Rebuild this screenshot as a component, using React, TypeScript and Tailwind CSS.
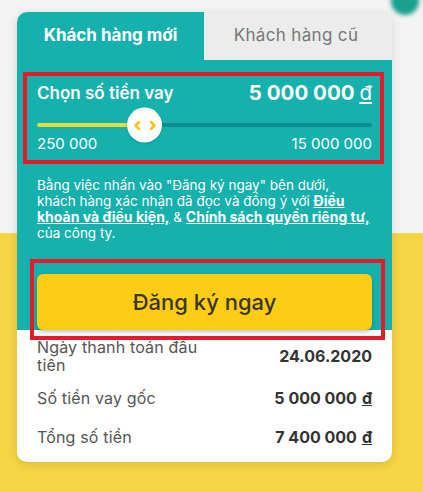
import React from "react";

const font = "font-['Inter','Noto_Sans',sans-serif]";

function Chevrons() {
  return (
    <svg width="24" height="10" viewBox="0 0 24 10" fill="none">
      <path d="M6 1.5 L2.5 5 L6 8.5" stroke="#f5c518" strokeWidth="2.6" strokeLinecap="round" strokeLinejoin="round" />
      <path d="M18 1.5 L21.5 5 L18 8.5" stroke="#f5c518" strokeWidth="2.6" strokeLinecap="round" strokeLinejoin="round" />
    </svg>
  );
}

function Row({ label, value, dong = false }: { label: string; value: string; dong?: boolean }) {
  return (
    <div className="flex items-center justify-between">
      <div className="max-w-[180px] text-[16px] leading-[18px] tracking-[0.01em] text-[#555]">{label}</div>
      <div className="text-[16px] font-bold leading-[18px] text-[#333]">
        {value}
        {dong && <span className="ml-[5px] underline">đ</span>}
      </div>
    </div>
  );
}

export default function App() {
  return (
    <div
      className={`relative h-[492px] w-[423px] overflow-hidden bg-[linear-gradient(to_bottom,#f3f3f3_0px,#f3f3f3_233px,#f5d445_233px)] pl-[17px] pt-[12px] ${font}`}
    >
      {/* teal blob peeking at top right */}
      <div className="absolute left-[391px] top-[-15px] h-[30px] w-[28px] rounded-full bg-[#1aa08e] blur-[2px]" />

      <div className="w-[375px] overflow-hidden rounded-[10px] bg-white shadow-[0_2px_10px_rgba(0,0,0,0.12)]">
        {/* tabs */}
        <div className="flex h-[48px]">
          <div className="flex w-[187px] items-center justify-center bg-[#16b1ad] text-[17px] font-bold text-white">
            Khách hàng mới
          </div>
          <div className="flex flex-1 items-center justify-center bg-[#ececec] pr-[4px] text-[17px] tracking-[0.02em] text-[#777]">
            Khách hàng cũ
          </div>
        </div>

        {/* teal panel */}
        <div className="bg-[#16b1ad] px-5 pt-[21px]">
          <div className="flex items-center justify-between leading-[24px] text-white">
            <span className="text-[17px] font-semibold">Chọn số tiền vay</span>
            <span className="text-[20.5px] font-bold">
              5 000 000 <span className="font-normal underline">đ</span>
            </span>
          </div>

          {/* slider */}
          <div className="relative mt-[10px] h-[20px]">
            <div className="absolute left-0 right-0 top-[8px] h-[4px] rounded-full bg-[#0c8f8b]" />
            <div className="absolute left-0 top-[8px] h-[4px] w-[110px] rounded-full bg-[#e3dc3a]" />
            <div className="absolute left-[90px] top-1/2 flex h-[35px] w-[35px] -translate-y-1/2 items-center justify-center rounded-full bg-white shadow-[0_1px_3px_rgba(0,0,0,0.15)]">
              <Chevrons />
            </div>
          </div>
          <div className="flex justify-between text-[15px] leading-[18px] text-white">
            <span>250 000</span>
            <span>15 000 000</span>
          </div>

          <p className="mt-[24px] whitespace-nowrap text-[13.5px] leading-[16px] text-white">
            Bằng việc nhấn vào "Đăng ký ngay" bên dưới,
            <br />
            khách hàng xác nhận đã đọc và đồng ý với{" "}
            <a className="text-[14px] font-bold underline">Điều</a>
            <br />
            <a className="text-[14px] font-bold underline">khoản và điều kiện,</a> &amp;{" "}
            <a className="text-[14px] font-bold underline">Chính sách quyền riêng tư,</a>
            <br />
            của công ty.
          </p>

          <button className="relative z-10 -mb-[28px] mt-[33px] flex h-[56px] w-full items-center justify-center rounded-[6px] bg-[#fdcd15] text-[22px] font-medium text-[#3b3622] shadow-[0_2px_4px_rgba(0,0,0,0.25)]">
            Đăng ký ngay
          </button>
        </div>

        {/* summary */}
        <div className="px-5 pb-[16px] pt-[36px]">
          <Row label="Ngày thanh toán đầu tiên" value="24.06.2020" />
          <div className="mt-[15px]">
            <Row label="Số tiền vay gốc" value="5 000 000" dong />
          </div>
          <div className="mt-[21px]">
            <Row label="Tổng số tiền" value="7 400 000" dong />
          </div>
        </div>
      </div>

      {/* red annotation boxes */}
      <div className="pointer-events-none absolute left-[23px] top-[72px] h-[92px] w-[361px] border-4 border-[#e31b2a]" />
      <div className="pointer-events-none absolute left-[30px] top-[259px] h-[81px] w-[355px] border-4 border-[#e31b2a]" />
    </div>
  );
}
